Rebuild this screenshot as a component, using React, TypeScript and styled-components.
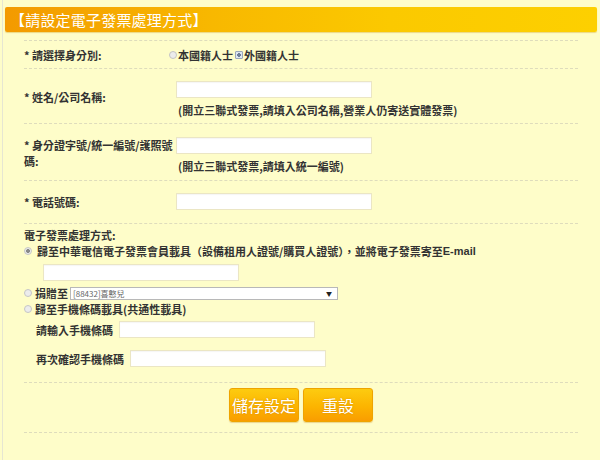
import React from "react";
import styled, { createGlobalStyle } from "styled-components";

const Global = createGlobalStyle`
  html, body { margin: 0; padding: 0; background: #fefdc9; }
  body {
    font-family: "Noto Sans CJK TC", "Liberation Sans", sans-serif;
    color: #333;
    font-size: 11px;
    font-weight: 600;
  }
  * { box-sizing: border-box; }
`;

const Page = styled.div`
  width: 598px;
  height: 460px;
  padding: 7px 3px 0 5px;
  background: #fefdc9;
  border-left: 1px solid #e6e6d2;
  margin-left: 2px;
  overflow: hidden;
`;

const Header = styled.div`
  height: 25px;
  margin-left: -3px;
  border-radius: 2px;
  background: linear-gradient(90deg, #f39a00 0%, #f8b800 35%, #fbc900 65%, #fdd000 100%);
  box-shadow: 0 1px 1px rgba(200, 150, 0, 0.35);
  color: #fff;
  font-size: 15px;
  font-weight: 400;
  line-height: 25px;
  padding-left: 5px;
  letter-spacing: 0.2px;
`;

const Form = styled.div`
  padding: 0 19px 0 16px;
  margin-top: 8px;
`;

const Section = styled.div<{ $h: number; $pt?: number }>`
  height: ${(p) => p.$h}px;
  padding-top: ${(p) => p.$pt ?? 0}px;
  border-top: 1px dashed #dedcbc;
`;

const LastLine = styled.div`
  border-top: 1px dashed #dedcbc;
`;

const FieldRow = styled.div<{ $align?: string }>`
  display: flex;
  align-items: ${(p) => p.$align ?? "flex-start"};
`;

const Label = styled.div<{ $w?: number; $pt?: number }>`
  width: ${(p) => p.$w ?? 152}px;
  flex: none;
  line-height: 16px;
  padding-top: ${(p) => p.$pt ?? 0}px;
  padding-right: 2px;
`;

const Field = styled.div`
  display: flex;
  flex-direction: column;
`;

const TextInput = styled.div<{ $w: number }>`
  width: ${(p) => p.$w}px;
  height: 17px;
  background: #fff;
  border: 1px solid #ebe6c4;
  box-shadow: inset 0 1px 1px rgba(0, 0, 0, 0.04);
`;

const Note = styled.div`
  margin-top: 5px;
  margin-left: 2px;
  line-height: 14px;
`;

const Radios = styled.div`
  display: flex;
  align-items: center;
  margin-left: 13px;
`;

const RadioDot = styled.span<{ $on?: boolean; $square?: boolean }>`
  display: inline-block;
  width: 8px;
  height: 8px;
  border-radius: ${(p) => (p.$square ? "1px" : "50%")};
  border: 1px solid ${(p) => (p.$on ? "#9aa7bb" : "#c4c4c4")};
  background: ${(p) =>
    p.$on
      ? "radial-gradient(circle, #6f7f98 0 1.6px, #dde6f2 2px)"
      : "#ececec"};
  margin-right: 1px;
  flex: none;
`;

const GrayDot = styled.span<{ $on?: boolean }>`
  display: inline-block;
  width: 8px;
  height: 8px;
  border-radius: 50%;
  border: 1px solid #c6c6c6;
  background: ${(p) =>
    p.$on ? "radial-gradient(circle, #8a8a8a 0 1.8px, #ececec 2.2px)" : "#ececec"};
  margin-right: 3px;
  flex: none;
`;

const RadioText = styled.span`
  margin-right: 2px;
`;

const Line = styled.div<{ $h?: number; $ml?: number }>`
  display: flex;
  align-items: center;
  height: ${(p) => p.$h ?? 16}px;
  margin-left: ${(p) => p.$ml ?? 0}px;
  white-space: nowrap;
`;

const Bold = styled.b`
  font-family: "Liberation Sans", sans-serif;
  font-weight: bold;
`;

const Select = styled.div`
  width: 268px;
  height: 13px;
  margin-left: 2px;
  background: #fff;
  border: 1px solid #b8b8b8;
  display: flex;
  align-items: center;
  justify-content: space-between;
  padding: 0 5px 0 2px;
  font-size: 8px;
  font-weight: 400;
  color: #666;
  line-height: 11px;
`;

const Arrow = styled.span`
  font-size: 6px;
  color: #222;
`;

const SubLabel = styled.span`
  margin-right: 6px;
`;

const Buttons = styled.div`
  display: flex;
  justify-content: center;
  gap: 4px;
  padding-top: 5px;
`;

const Button = styled.div`
  width: 70px;
  height: 34px;
  border-radius: 3px;
  border: 1px solid #eea400;
  background: linear-gradient(180deg, #fdcb10 0%, #fcb400 55%, #f99d00 100%);
  color: #fff;
  font-size: 16px;
  font-weight: 400;
  line-height: 32px;
  text-align: center;
  text-shadow: 0 0 2px rgba(170, 90, 0, 0.45);
  box-shadow: 0 1px 1px rgba(190, 120, 0, 0.3);
`;

export default function App() {
  return (
    <>
      <Global />
      <Page>
        <Header>【請設定電子發票處理方式】</Header>
        <Form>
          <Section $h={28}>
            <FieldRow $align="center" style={{ height: 27 }}>
              <Label $w={132}>* 請選擇身分別:</Label>
              <Radios>
                <RadioDot />
                <RadioText>本國籍人士</RadioText>
                <RadioDot $on $square />
                <RadioText>外國籍人士</RadioText>
              </Radios>
            </FieldRow>
          </Section>
          <Section $h={55} $pt={12}>
            <FieldRow>
              <Label $pt={8}>* 姓名/公司名稱:</Label>
              <Field>
                <TextInput $w={196} />
                <Note>(開立三聯式發票,請填入公司名稱,營業人仍寄送實體發票)</Note>
              </Field>
            </FieldRow>
          </Section>
          <Section $h={57} $pt={13}>
            <FieldRow>
              <Label $pt={0}>* 身分證字號/統一編號/護照號碼:</Label>
              <Field>
                <TextInput $w={196} />
                <Note>(開立三聯式發票,請填入統一編號)</Note>
              </Field>
            </FieldRow>
          </Section>
          <Section $h={43} $pt={12}>
            <FieldRow $align="center">
              <Label>* 電話號碼:</Label>
              <TextInput $w={196} />
            </FieldRow>
          </Section>
          <Section $h={159} $pt={3}>
            <Line>電子發票處理方式:</Line>
            <Line>
              <GrayDot $on style={{ marginRight: 5 }} />
              歸至中華電信電子發票會員載具（設備租用人證號/購買人證號），並將電子發票寄至<Bold>E-mail</Bold>
            </Line>
            <Line $h={22} $ml={19} style={{ alignItems: "flex-end" }}>
              <TextInput $w={196} />
            </Line>
            <Line $h={16} style={{ marginTop: 4 }}>
              <GrayDot />
              捐贈至
              <Select>
                <span>[88432]喜憨兒</span>
                <Arrow>▼</Arrow>
              </Select>
            </Line>
            <Line $h={15}>
              <GrayDot />
              歸至手機條碼載具(共通性載具)
            </Line>
            <Line $h={19} $ml={12} style={{ marginTop: 4 }}>
              <SubLabel>請輸入手機條碼</SubLabel>
              <TextInput $w={196} />
            </Line>
            <Line $h={19} $ml={12} style={{ marginTop: 10 }}>
              <SubLabel>再次確認手機條碼</SubLabel>
              <TextInput $w={196} />
            </Line>
          </Section>
          <Section $h={50}>
            <Buttons>
              <Button>儲存設定</Button>
              <Button>重設</Button>
            </Buttons>
          </Section>
          <LastLine />
        </Form>
      </Page>
    </>
  );
}
